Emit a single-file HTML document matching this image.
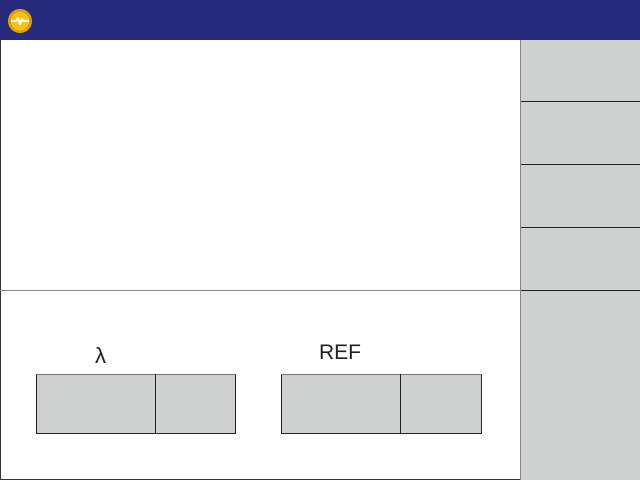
<!DOCTYPE html>
<html><head><meta charset="utf-8"><style>
body{margin:0;width:640px;height:480px;position:relative;background:#fff;overflow:hidden;font-family:"Liberation Sans",sans-serif}
div{position:absolute;box-sizing:border-box}
</style></head><body>
<div style="left:0;top:0;width:640px;height:40px;background:#272a7c"></div>
<svg style="position:absolute;left:7px;top:8px" width="26" height="26" viewBox="0 0 26 26">
<circle cx="13" cy="13" r="12" fill="#e8a400"/>
<circle cx="13" cy="13" r="10" fill="#fcc010" stroke="#d89000" stroke-width="1"/>
<path d="M4 13H9L11 10L13 16L15 11L16 13H22" fill="none" stroke="#fff" stroke-width="2" stroke-linejoin="round"/>
</svg>
<div style="left:0;top:40px;width:1px;height:440px;background:#333"></div>
<div style="left:0;top:479px;width:520px;height:1px;background:#333"></div>
<div style="left:0;top:290px;width:520px;height:1px;background:#888"></div>
<div style="left:520px;top:40px;width:120px;height:440px;background:#cfd0d0;border-left:1px solid #888"></div>
<div style="left:521px;top:101px;width:119px;height:1px;background:#222"></div>
<div style="left:521px;top:164px;width:119px;height:1px;background:#222"></div>
<div style="left:521px;top:227px;width:119px;height:1px;background:#222"></div>
<div style="left:521px;top:290px;width:119px;height:1px;background:#222"></div>
<div style="left:95px;top:343px;font-size:22px;color:#222">λ</div>
<div style="left:319px;top:341px;font-size:21px;color:#222">REF</div>
<div style="left:36px;top:374px;width:200px;height:60px;background:#cfd0d0;border:1px solid #222;border-top-color:#777"></div>
<div style="left:155px;top:374px;width:1px;height:60px;background:#222"></div>
<div style="left:281px;top:374px;width:201px;height:60px;background:#cfd0d0;border:1px solid #222;border-top-color:#777"></div>
<div style="left:400px;top:374px;width:1px;height:60px;background:#222"></div>
</body></html>
